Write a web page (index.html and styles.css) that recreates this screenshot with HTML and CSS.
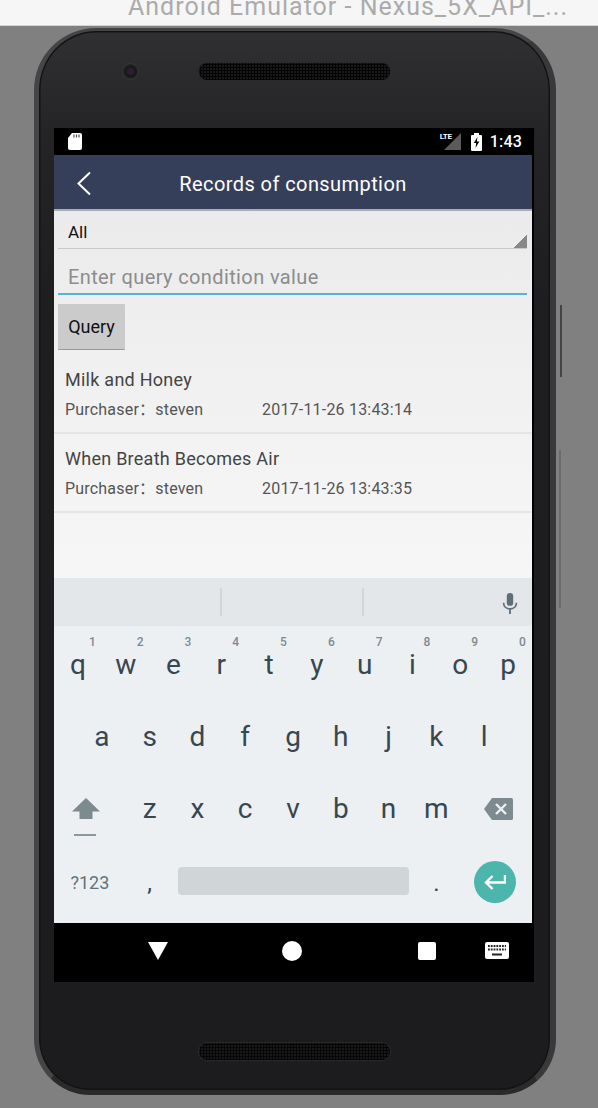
FILE: index.html
```html
<!DOCTYPE html>
<html lang="en">
<head>
<meta charset="utf-8">
<title>Android Emulator - Nexus_5X_API</title>
<link rel="stylesheet" href="styles.css">
</head>
<body>
<header class="titlebar"><span class="titlebar-text">Android Emulator - Nexus_5X_API_...</span></header>
<main class="stage">
  <div class="phone">
    <span class="side-btn side-power"></span>
    <span class="side-btn side-volume"></span>
    <div class="bezel-top">
      <span class="camera"></span>
      <span class="speaker"></span>
    </div>
    <div class="screen">
      <div class="statusbar">
        <svg class="sd" width="14" height="17" viewBox="0 0 14 17"><path d="M4 0h8a2 2 0 0 1 2 2v13a2 2 0 0 1-2 2H2a2 2 0 0 1-2-2V5z" fill="#fff"/><path d="M6 1.500v3M8.500 1.500v3M11 1.500v3" stroke="#555" stroke-width="1.200"/></svg>
        <span class="signal">
          <span class="lte">LTE</span>
          <svg width="17" height="17" viewBox="0 0 17 17"><path d="M17 0v17H0z" fill="#5b5b5b"/></svg>
        </span>
        <svg class="battery" width="11" height="18" viewBox="0 0 11 18"><path d="M3 0h5v2h2a1 1 0 0 1 1 1v14a1 1 0 0 1-1 1H1a1 1 0 0 1-1-1V3a1 1 0 0 1 1-1h2z" fill="#fff"/><path d="M6.500 4 2.800 10h2.400L4.500 15 8.300 8.500H5.800z" fill="#000"/></svg>
        <span class="time">1:43</span>
      </div>
      <div class="appbar">
        <svg class="back" width="16" height="25" viewBox="0 0 16 25"><path d="M14 1.500 2.500 12.500 14 23.500" fill="none" stroke="#fff" stroke-width="2"/></svg>
        <span class="appbar-title">Records of consumption</span>
      </div>
      <section class="content">
        <div class="spinner">All<span class="spinner-arrow"></span></div>
        <div class="query-input">Enter query condition value</div>
        <button class="query-btn" type="button">Query</button>
        <ul class="records">
          <li class="record">
            <div class="record-title">Milk and Honey</div>
            <div class="record-meta"><span class="buyer">Purchaser：steven</span><span>2017-11-26 13:43:14</span></div>
          </li>
          <li class="record">
            <div class="record-title">When Breath Becomes Air</div>
            <div class="record-meta"><span class="buyer">Purchaser：steven</span><span>2017-11-26 13:43:35</span></div>
          </li>
        </ul>
      </section>
      <div class="suggest">
        <span class="suggest-cell"></span>
        <span class="suggest-cell"></span>
        <span class="suggest-mic">
          <svg width="16" height="22" viewBox="0 0 16 24"><rect x="4.500" y="0" width="7" height="14" rx="3.500" fill="#5f6f78"/><path d="M1 10.500c0 4.200 3 6.800 7 6.800s7-2.600 7-6.800" fill="none" stroke="#5f6f78" stroke-width="1.800"/><path d="M8 17v6" stroke="#5f6f78" stroke-width="2"/></svg>
        </span>
      </div>
      <div class="keyboard">
        <div class="kb-row">
          <span class="key">q<sup class="hint">1</sup></span><span class="key">w<sup class="hint">2</sup></span><span class="key">e<sup class="hint">3</sup></span><span class="key">r<sup class="hint">4</sup></span><span class="key">t<sup class="hint">5</sup></span><span class="key">y<sup class="hint">6</sup></span><span class="key">u<sup class="hint">7</sup></span><span class="key">i<sup class="hint">8</sup></span><span class="key">o<sup class="hint">9</sup></span><span class="key">p<sup class="hint">0</sup></span>
        </div>
        <div class="kb-row kb-row-home">
          <span class="key">a</span><span class="key">s</span><span class="key">d</span><span class="key">f</span><span class="key">g</span><span class="key">h</span><span class="key">j</span><span class="key">k</span><span class="key">l</span>
        </div>
        <div class="kb-row">
          <span class="key key-wide key-shift">
            <svg width="28" height="38" viewBox="0 0 28 38"><path d="M14 0 28 13.500H20.500V21H7.500V13.500H0z" fill="#7d8b91"/><rect x="2" y="36" width="22" height="2" fill="#8d989d"/></svg>
          </span>
          <span class="key">z</span><span class="key">x</span><span class="key">c</span><span class="key">v</span><span class="key">b</span><span class="key">n</span><span class="key">m</span>
          <span class="key key-wide key-del">
            <svg width="29" height="22" viewBox="0 0 29 22"><path d="M8 0h19.500a1.500 1.500 0 0 1 1.500 1.500v19a1.500 1.500 0 0 1-1.500 1.500H8L0 11z" fill="#7d8b91"/><path d="M12 6l10 10M22 6 12 16" stroke="#ecf0f3" stroke-width="2.400"/></svg>
          </span>
        </div>
        <div class="kb-row">
          <span class="key key-wide key-sym">?123</span>
          <span class="key key-punct">,</span>
          <span class="key key-space"><span class="spacebar"></span></span>
          <span class="key key-punct">.</span>
          <span class="key key-enter">
            <span class="enter-circle">
              <svg width="22" height="16" viewBox="0 0 22 16"><path d="M21 1v7.500H2.500M8.500 2 2 8.500 8.500 15" fill="none" stroke="#fff" stroke-width="2.400"/></svg>
            </span>
          </span>
        </div>
      </div>
      <nav class="navbar">
        <svg width="20" height="18" viewBox="0 0 20 18"><path d="M0 0h20L10 18z" fill="#fff"/></svg>
        <span class="nav-home"></span>
        <span class="nav-recent"></span>
        <svg class="nav-kbd" width="24" height="17" viewBox="0 0 24 17"><rect width="24" height="17" rx="2" fill="#fff"/><path d="M3 4h18M3 7.500h18" stroke="#222" stroke-width="1.800" stroke-dasharray="1.800 1"/><rect x="7" y="11.500" width="10" height="2" fill="#222"/></svg>
      </nav>
    </div>
    <div class="bezel-bottom"><span class="speaker"></span></div>
  </div>
</main>
</body>
</html>
```
FILE: styles.css
```css
* { box-sizing: border-box; }
html, body { margin: 0; padding: 0; height: 1108px; overflow: hidden; }
body { background: #808080; font-family: Roboto, "Noto Sans CJK SC", "Liberation Sans", sans-serif; }

.titlebar {
  height: 26px;
  background: #f6f6f6;
  border-bottom: 1px solid #d4d4d4;
  overflow: hidden;
  padding-left: 128px;
}
.titlebar-text {
  display: block;
  margin-top: -7px;
  font-size: 25px;
  line-height: 28px;
  color: #ababab;
  letter-spacing: 1px;
  white-space: nowrap;
}

.stage { padding: 2px 0 0 34px; }

.phone {
  position: relative;
  width: 522px;
  height: 1067px;
  padding: 0 0 0 15px;
  background: linear-gradient(180deg, #302f31 0%, #242325 10%, #1e1e20 25%, #1c1c1e 100%);
  border-radius: 62px 62px 56px 56px;
  border-style: solid;
  border-width: 3px 6px 5px 5px;
  border-color: #444345 #39383a #2b2a2b #454446;
  box-shadow: inset 0 0 0 1.5px #131314;
}
.side-btn { position: absolute; display: block; width: 2px; }
.side-power { left: 521px; top: 274px; height: 72px; background: #444; }
.side-volume { left: 520px; top: 419px; height: 158px; background: #6c6c6c; }

.bezel-top {
  position: relative;
  height: 97px;
  display: flex;
  justify-content: center;
  padding: 32px 15px 0 0;
}
.camera {
  position: absolute;
  left: 68px;
  top: 32px;
  width: 17px;
  height: 17px;
  border-radius: 50%;
  background: radial-gradient(circle, #2a1f30 0 3px, #1a191b 4px 6px, #333235 8px);
}
.speaker {
  display: block;
  width: 191px;
  height: 17px;
  border-radius: 8px;
  background-color: #19191a;
  background-image: radial-gradient(circle, #050505 1px, transparent 1.200px);
  background-size: 3px 3px;
  box-shadow: 0 0 0 1px #2a2a2b;
}

.screen { width: 480px; height: 854px; background: #000; display: flex; flex-direction: column; }

.statusbar {
  height: 27px;
  width: 478px;
  display: flex;
  align-items: center;
  padding: 0 10px 0 14px;
  color: #fff;
  flex: none;
}
.sd { margin-right: auto; }
.signal { position: relative; display: flex; margin-right: 10px; }
.lte {
  position: absolute;
  left: -4px;
  top: -1px;
  font-size: 8px;
  line-height: 9px;
  font-weight: 700;
  letter-spacing: -0.3px;
  color: #fff;
}
.battery { margin-right: 8px; }
.time { font-size: 16px; font-weight: 500; line-height: 20px; letter-spacing: 0.2px; }

.appbar {
  position: relative;
  width: 478px;
  height: 56px;
  flex: none;
  background: #363f5a;
  border-bottom: 2px solid #a9adb8;
  display: flex;
  align-items: center;
  justify-content: center;
  padding-top: 3px;
}
.back { position: absolute; left: 22px; top: 16px; }
.appbar-title { color: #fff; font-size: 20px; line-height: 28px; letter-spacing: 0.42px; }

.content {
  width: 478px;
  height: 367px;
  flex: none;
  background: linear-gradient(180deg, #ebebeb 0%, #f5f5f5 85%, #f6f6f6 100%);
  padding-top: 1px;
  overflow: hidden;
}

.spinner {
  position: relative;
  height: 37px;
  margin: 0 5px 0 4px;
  padding: 9px 0 0 10px;
  font-size: 17px;
  line-height: 22px;
  color: #111;
  border-bottom: 1px solid #c8c8c8;
}
.spinner-arrow {
  position: absolute;
  right: 0;
  bottom: 0;
  width: 14px;
  height: 14px;
  background: linear-gradient(135deg, transparent 50%, #888 50%);
}
.query-input {
  position: relative;
  height: 46px;
  margin: 0 5px 0 4px;
  padding: 15px 0 0 10px;
  font-size: 20px;
  line-height: 26px;
  color: #8c8c8c;
  border-bottom: 2px solid #56b4d8;
  letter-spacing: 0.38px;
}
.query-btn {
  display: block;
  margin: 9px 0 0 4px;
  width: 67px;
  height: 46px;
  padding: 1px 0 0;
  border: 0;
  border-bottom: 1px solid #9a9a9a;
  border-radius: 1px;
  background: #cbcbcb;
  font: 18px/22px Roboto, sans-serif;
  color: #111;
}

.records { list-style: none; margin: 5px 0 0; padding: 0; }
.record { height: 79px; padding: 13px 0 0 11px; border-bottom: 2px solid #e4e4e4; }
.record-title { font-size: 18px; line-height: 24px; color: #444; letter-spacing: 0.26px; }
.record-meta { display: flex; margin-top: 8px; font-size: 16px; line-height: 20px; color: #555; letter-spacing: 0.2px; }
.buyer { width: 197px; flex: none; }

.suggest {
  width: 478px;
  height: 48px;
  flex: none;
  background: #e3e7ea;
  display: flex;
  align-items: center;
}
.suggest-cell { width: 168px; height: 28px; border-right: 2px solid #d2d6d9; }
.suggest-cell + .suggest-cell { width: 142px; }
.suggest-mic { flex: 1; display: flex; justify-content: flex-end; padding: 3px 14px 0 0; }

.keyboard {
  width: 478px;
  height: 297px;
  flex: none;
  background: #ecf0f3;
  padding-top: 3px;
}
.kb-row { display: flex; height: 72px; }
.kb-row-home { padding: 0 24px; }
.key {
  position: relative;
  flex: 1 1 0;
  display: flex;
  align-items: center;
  justify-content: center;
  font-size: 28px;
  line-height: 32px;
  color: #37474f;
}
.hint {
  position: absolute;
  top: 6px;
  left: 50%;
  margin-left: 11px;
  font-size: 12px;
  line-height: 14px;
  font-weight: 500;
  color: #7e8a90;
}
.key-wide { flex: 1.5 1 0; }
.key-shift svg { margin: 15px 7px 0 0; }
.key-del svg { margin-left: 4px; }
.key-sym { font-size: 18px; color: #64737b; padding-top: 3px; }
.key-punct { font-size: 24px; padding-top: 4px; }
.key-space { flex: 5 1 0; }
.spacebar { flex: 1; margin: 0 4px; height: 28px; background: #d0d5d8; border-radius: 4px; }
.key-enter { flex: 1.5 1 0; }
.enter-circle {
  width: 42px;
  height: 42px;
  margin: 1px 2px 0 0;
  border-radius: 50%;
  background: #4db6ac;
  display: flex;
  align-items: center;
  justify-content: center;
}

.navbar {
  height: 59px;
  flex: none;
  display: flex;
  align-items: center;
  padding: 0 0 4px 94px;
}
.nav-home { width: 20px; height: 20px; border-radius: 50%; background: #fff; margin-left: 114px; }
.nav-recent { width: 18px; height: 18px; border-radius: 2px; background: #fff; margin-left: 116px; }
.nav-kbd { margin-left: 49px; }

.bezel-bottom { display: flex; justify-content: center; padding: 61px 15px 0 0; }
```
